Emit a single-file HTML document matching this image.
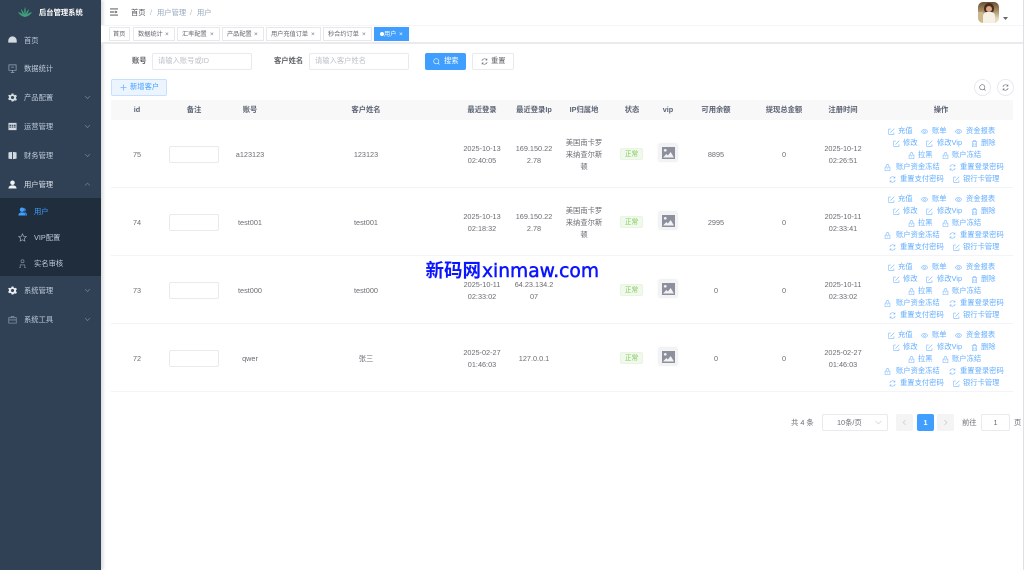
<!DOCTYPE html>
<html lang="zh">
<head>
<meta charset="utf-8">
<title>后台管理系统</title>
<style>
html,body{margin:0;padding:0;background:#fff}
#p{position:relative;width:1024px;height:570px;overflow:hidden;background:#fff;font-family:"Liberation Sans","Noto Sans CJK SC",sans-serif;font-size:7.3px;color:#696c72;filter:blur(.35px)}
#p div,#p span,#p b,#p svg{position:absolute;display:block}
#p b{font-weight:400;white-space:nowrap}
.sb{left:0;top:0;width:101px;height:570px;background:#304156;box-shadow:2px 0 3px rgba(0,21,41,.16)}
.m{left:24px;color:#bfcbd9;line-height:10px;white-space:nowrap;margin-top:.6px}
.mi{left:8px;width:9px;height:9px;fill:#d3dae2;stroke:none}
.ar{left:84px;width:7px;height:7px;fill:none;stroke:#7d8b9c;stroke-width:.8}
.tag{top:27px;height:14px;border:1px solid #e6e8ec;background:#fff;box-sizing:border-box}
.tt{top:1px;line-height:11px;white-space:nowrap;color:#62666f;font-size:6.2px}
.x{top:1px;line-height:11px;font-size:6.5px;color:#777}
.lb{top:56px;line-height:10px;color:#606266;font-weight:700;white-space:nowrap}
.in{border:1px solid #e8eaee;border-radius:2px;background:#fff;box-sizing:border-box}
.ph{color:#bcc0c8;line-height:10px;white-space:nowrap}
.th{top:100px;height:20px;line-height:19px;text-align:center;color:#5c6474;font-weight:700;white-space:nowrap}
.r{left:111px;width:902px;height:68px;border-bottom:1px solid #f3f4f7;box-sizing:border-box}
.c{text-align:center;line-height:12px;color:#696c72;white-space:nowrap;margin-top:.6px}
.note{left:58px;top:26px;width:50px;height:17px;border:1px solid #e8eaee;border-radius:2px;box-sizing:border-box;background:#fff}
.st{left:509px;top:28px;width:23px;height:12px;line-height:11px;background:#f0f9eb;border:1px solid #e9f5e1;border-radius:2px;box-sizing:border-box;color:#7cc95a;text-align:center;font-size:6.6px}
.vp{left:548px;top:24px;width:18px;height:17px;background:#f2f3f5;box-shadow:0 0 2px rgba(0,0,0,.16);border-radius:1px}
.vp svg{left:2.5px;top:2.5px;width:13px;height:12px}
.o{color:#62aeff;line-height:10px;white-space:nowrap;margin-top:1px}
.i{width:7px;height:7px;fill:none;stroke:#72b5ff;stroke-width:.8}
.r .i{margin-top:1px}
</style>
</head>
<body>
<svg width="0" height="0" style="position:absolute;display:block">
<defs>
<symbol id="e" viewBox="0 0 10 10"><path d="M4 1.500H1v7.500h7.500V6M3.500 6.500 9 1"/></symbol>
<symbol id="y" viewBox="0 0 10 10"><path d="M.5 5C2 2.500 3.500 2 5 2s3 .5 4.500 3C8 7.500 6.500 8 5 8S2 7.500.5 5Z"/><circle cx="5" cy="5" r="1.400"/></symbol>
<symbol id="t" viewBox="0 0 10 10"><path d="M1 2.500h8M3.500 2.500V1h3v1.500M2 2.500V9.500h6V2.500M4 4.500V8M6 4.500V8"/></symbol>
<symbol id="l" viewBox="0 0 10 10"><path d="M1.500 4.500h7v5h-7zM3 4.500V2.800a2 2 0 0 1 4 0v1.700M5 6v1.500"/></symbol>
<symbol id="f" viewBox="0 0 10 10"><path d="M1.200 4.200A4 4 0 0 1 8.200 2.600M8.800 5.800A4 4 0 0 1 1.800 7.400M8.500 .8v2.200H6.300M1.500 9.200V7h2.200"/></symbol>
<symbol id="s" viewBox="0 0 10 10"><circle cx="4.700" cy="4.700" r="3.700"/><path d="M7.400 7.400 9.300 9.300"/></symbol>
</defs>
</svg>
<div id="p">

<div style="left:1023px;top:0;width:1px;height:570px;background:#dcdfe3"></div>

<div class="sb"></div>
<svg style="left:17px;top:6px;width:16px;height:12px" viewBox="0 0 16 12"><path d="M8 11C7 7 7 4 8 1c1 3 1 6 0 10ZM8 11C6 9 4.500 6.500 4 3c2 2 3.500 4.500 4 8ZM8 11c2-2 3.500-4.500 4-8-2 2-3.500 4.500-4 8ZM8 11C5.500 10.500 2.500 9 1 6c3 .8 5.500 2.500 7 5ZM8 11c2.500-.5 5.500-2 7-5-3 .8-5.500 2.500-7 5Z" fill="#3fa37a"/></svg>
<div style="left:39px;top:7px;line-height:10px;color:#fff;font-weight:700;white-space:nowrap;margin-top:.6px">后台管理系统</div>

<svg class="mi" style="top:35px" viewBox="0 0 10 10"><path d="M5 1.500A4.700 4.700 0 0 0 .3 6.200V8.500h9.400V6.200A4.700 4.700 0 0 0 5 1.500Z"/></svg>
<div class="m" style="top:35px">首页</div>
<svg class="mi" style="top:64px;fill:none;stroke:#9aa7b6;stroke-width:.8" viewBox="0 0 10 10"><path d="M1 1h8v6H1zM5 7v2M3 9.300h4M3.500 3.500h3"/></svg>
<div class="m" style="top:63px">数据统计</div>
<svg class="mi" style="top:93px" viewBox="0 0 10 10"><path fill-rule="evenodd" d="M4 .5h2l.3 1.300 1.300.6L8.900 2l1 1.700-1 .9v1.400l1 .9-1 1.700-1.300-.4-1.300.6L6 9.500H4l-.3-1.300-1.300-.6L1.100 8l-1-1.700 1-.9V4l-1-.9L1.100 2l1.300.4 1.300-.6ZM5 3.300a1.700 1.700 0 1 0 0 3.400 1.700 1.700 0 0 0 0-3.400Z"/></svg>
<div class="m" style="top:92px">产品配置</div>
<svg class="ar" style="top:94px" viewBox="0 0 10 10"><path d="M1.500 3 5 6.500 8.500 3"/></svg>
<svg class="mi" style="top:122px" viewBox="0 0 10 10"><path fill-rule="evenodd" d="M.5 1h9v8h-9ZM1.500 3v1.300h2V3Zm2.700 0v1.300h1.600V3Zm2.300 0v1.300h2V3ZM1.500 5v1.300h2V5Zm2.700 0v1.300h1.600V5Zm2.300 0v1.300h2V5Z"/></svg>
<div class="m" style="top:121px">运营管理</div>
<svg class="ar" style="top:123px" viewBox="0 0 10 10"><path d="M1.500 3 5 6.500 8.500 3"/></svg>
<svg class="mi" style="top:151px" viewBox="0 0 10 10"><path d="M.5 1.500 4.500 1v8l-4-.5ZM5.500 1l4 .5v7l-4 .5Z"/></svg>
<div class="m" style="top:150px">财务管理</div>
<svg class="ar" style="top:152px" viewBox="0 0 10 10"><path d="M1.500 3 5 6.500 8.500 3"/></svg>
<svg class="mi" style="top:180px;fill:#f0f3f6" viewBox="0 0 10 10"><circle cx="5" cy="3" r="2.500"/><path d="M.5 9.500C.5 7 2.500 6 5 6s4.500 1 4.500 3.500Z"/></svg>
<div class="m" style="top:179px;color:#dfe5ec">用户管理</div>
<svg class="ar" style="top:181px" viewBox="0 0 10 10"><path d="M1.500 6.500 5 3l3.500 3.500"/></svg>

<div style="left:0;top:198px;width:101px;height:78px;background:#1f2d3d"></div>
<svg class="mi" style="left:18px;top:207px;fill:#409eff" viewBox="0 0 10 10"><circle cx="4.500" cy="3" r="2.500"/><path d="M.5 9.500C.5 7 2 6 4.500 6S8.500 7 8.500 9.500ZM7 1c2 1 2 3 .5 4.500 1.500.5 2.500 2 2.500 4H9C9 8 8.500 7 7.500 6.500Z"/></svg>
<div class="m" style="left:34px;top:206px;color:#409eff">用户</div>
<svg class="mi" style="left:18px;top:233px;fill:none;stroke:#9aa7b6;stroke-width:.8" viewBox="0 0 10 10"><path d="M5 1 6.200 3.700 9.200 4 7 6 7.600 9 5 7.500 2.400 9 3 6 .8 4 3.800 3.700Z"/></svg>
<div class="m" style="left:34px;top:232px">VIP配置</div>
<svg class="mi" style="left:18px;top:259px;fill:none;stroke:#7f8c9c;stroke-width:.8" viewBox="0 0 10 10"><circle cx="5" cy="2.500" r="1.700"/><path d="M2.500 9.500V6.500h5v3M1 9.500h2M7 9.500h2"/></svg>
<div class="m" style="left:34px;top:258px">实名审核</div>

<svg class="mi" style="top:286px;fill:#e6ebf0" viewBox="0 0 10 10"><path fill-rule="evenodd" d="M4 .5h2l.3 1.300 1.300.6L8.900 2l1 1.700-1 .9v1.400l1 .9-1 1.700-1.300-.4-1.300.6L6 9.500H4l-.3-1.300-1.300-.6L1.100 8l-1-1.700 1-.9V4l-1-.9L1.100 2l1.300.4 1.300-.6ZM5 3.300a1.700 1.700 0 1 0 0 3.400 1.700 1.700 0 0 0 0-3.400Z"/></svg>
<div class="m" style="top:285px">系统管理</div>
<svg class="ar" style="top:287px" viewBox="0 0 10 10"><path d="M1.500 3 5 6.500 8.500 3"/></svg>
<svg class="mi" style="top:315px;fill:none;stroke:#7f8c9c;stroke-width:.9" viewBox="0 0 10 10"><path d="M.8 3h8.400v6H.8zM3.500 3V1.500h3V3M.8 5.500h8.400"/></svg>
<div class="m" style="top:314px">系统工具</div>
<svg class="ar" style="top:316px" viewBox="0 0 10 10"><path d="M1.500 3 5 6.500 8.500 3"/></svg>

<svg style="left:110px;top:8px;width:8px;height:8px" viewBox="0 0 9 8"><path d="M0 .5h9M0 4h5M0 7.500h9" stroke="#444" fill="none"/><path d="M6 2.500v3l2.500-1.500Z" fill="#444"/></svg>
<div style="left:131px;top:7px;line-height:10px;color:#4f5258;white-space:nowrap;margin-top:.6px">首页</div>
<div style="left:150px;top:7px;line-height:10px;color:#b4b8be;margin-top:.6px">/</div>
<div style="left:157px;top:7px;line-height:10px;color:#97a8be;white-space:nowrap;margin-top:.6px">用户管理</div>
<div style="left:190px;top:7px;line-height:10px;color:#b4b8be;margin-top:.6px">/</div>
<div style="left:197px;top:7px;line-height:10px;color:#97a8be;white-space:nowrap;margin-top:.6px">用户</div>

<div style="left:978px;top:2px;width:21px;height:21px;border-radius:5px;overflow:hidden;background:linear-gradient(180deg,#6b5136 0%,#a48a62 40%,#e6dcc2 80%,#e9ddb9 100%)">
<div style="left:6px;top:1px;width:10px;height:11px;border-radius:5px;background:#4b2d1f"></div>
<div style="left:8px;top:4px;width:6px;height:6px;border-radius:3px;background:#d9a98c"></div>
<div style="left:5px;top:10px;width:12px;height:11px;border-radius:4px 4px 0 0;background:#f5f1e4"></div>
<div style="left:0;top:10px;width:5px;height:11px;background:#cdb88c"></div>
</div>
<svg style="left:1003px;top:17px;width:5px;height:3px" viewBox="0 0 5 3"><path d="M0 0h5L2.500 3Z" fill="#666"/></svg>

<div style="left:101px;top:25px;width:922px;height:19px;background:#fff;border-top:1px solid #f4f5f6;border-bottom:2px solid #e8eaec;box-sizing:border-box"></div>

<div class="tag" style="left:109px;width:21px"><span class="tt" style="left:3px">首页</span></div>
<div class="tag" style="left:133px;width:42px"><span class="tt" style="left:4px">数据统计</span><span class="x" style="left:31px">×</span></div>
<div class="tag" style="left:177px;width:43px"><span class="tt" style="left:4px">汇率配置</span><span class="x" style="left:32px">×</span></div>
<div class="tag" style="left:222px;width:42px"><span class="tt" style="left:4px">产品配置</span><span class="x" style="left:31px">×</span></div>
<div class="tag" style="left:266px;width:55px"><span class="tt" style="left:4px">用户充值订单</span><span class="x" style="left:44px">×</span></div>
<div class="tag" style="left:323px;width:49px"><span class="tt" style="left:4px">秒合约订单</span><span class="x" style="left:38px">×</span></div>
<div class="tag" style="left:374px;width:35px;background:#409eff;border-color:#409eff"><span style="left:5px;top:4px;width:4px;height:4px;border-radius:2px;background:#fff"></span><span class="tt" style="left:9px;color:#fff">用户</span><span class="x" style="left:24px;color:#fff">×</span></div>

<div class="lb" style="left:132px">账号</div>
<div class="in" style="left:152px;top:53px;width:100px;height:17px"></div>
<div class="ph" style="left:158px;top:56px">请输入账号或ID</div>
<div class="lb" style="left:274px">客户姓名</div>
<div class="in" style="left:309px;top:53px;width:100px;height:17px"></div>
<div class="ph" style="left:315px;top:56px">请输入客户姓名</div>
<div style="left:425px;top:53px;width:41px;height:17px;border-radius:2px;background:#409eff"></div>
<svg class="i" style="left:433px;top:58px;stroke:#fff"><use href="#s"/></svg>
<div style="left:444px;top:56px;line-height:10px;color:#fff;white-space:nowrap">搜索</div>
<div class="in" style="left:472px;top:53px;width:42px;height:17px"></div>
<svg class="i" style="left:481px;top:58px;stroke:#606266"><use href="#f"/></svg>
<div style="left:491px;top:56px;line-height:10px;color:#606266;white-space:nowrap">重置</div>

<div style="left:111px;top:79px;width:56px;height:17px;border:1px solid #c6e1ff;border-radius:2px;background:#ecf5ff;box-sizing:border-box"></div>
<svg class="i" style="left:120px;top:84px"><path d="M3.500 .5v6M.5 3.500h6"/></svg>
<div style="left:130px;top:82px;line-height:10px;color:#409eff;white-space:nowrap">新增客户</div>
<div style="left:974px;top:79px;width:17px;height:17px;border:1px solid #e8eaee;border-radius:50%;box-sizing:border-box"></div>
<svg class="i" style="left:979px;top:84px;stroke:#606266"><use href="#s"/></svg>
<div style="left:997px;top:79px;width:17px;height:17px;border:1px solid #e8eaee;border-radius:50%;box-sizing:border-box"></div>
<svg class="i" style="left:1002px;top:84px;stroke:#606266"><use href="#f"/></svg>

<div style="left:111px;top:100px;width:902px;height:20px;background:#f8f8f9"></div>
<div class="th" style="left:117px;width:40px">id</div>
<div class="th" style="left:174px;width:40px">备注</div>
<div class="th" style="left:230px;width:40px">账号</div>
<div class="th" style="left:336px;width:60px">客户姓名</div>
<div class="th" style="left:452px;width:60px">最近登录</div>
<div class="th" style="left:504px;width:60px">最近登录Ip</div>
<div class="th" style="left:554px;width:60px">IP归属地</div>
<div class="th" style="left:612px;width:40px">状态</div>
<div class="th" style="left:648px;width:40px">vip</div>
<div class="th" style="left:686px;width:60px">可用余额</div>
<div class="th" style="left:754px;width:60px">提现总金额</div>
<div class="th" style="left:813px;width:60px">注册时间</div>
<div class="th" style="left:911px;width:60px">操作</div>

<!-- row 75 -->
<div class="r" style="top:120px">
<div class="c" style="left:6px;width:40px;top:28px">75</div>
<div class="note"></div>
<div class="c" style="left:109px;width:60px;top:28px">a123123</div>
<div class="c" style="left:225px;width:60px;top:28px">123123</div>
<div class="c" style="left:341px;width:60px;top:22px">2025-10-13<br>02:40:05</div>
<div class="c" style="left:393px;width:60px;top:22px">169.150.22<br>2.78</div>
<div class="c" style="left:443px;width:60px;top:16px">美国南卡罗<br>来纳查尔斯<br>顿</div>
<div class="st">正常</div>
<div class="vp"><svg viewBox="0 0 12 12" preserveAspectRatio="none"><path fill-rule="evenodd" d="M0 0h12v12H0ZM3 2a1.300 1.300 0 1 0 0 2.600A1.300 1.300 0 0 0 3 2ZM1 10.500h10L8 5 5.500 8.500 4 7Z" fill="#8d909c"/></svg></div>
<div class="c" style="left:575px;width:60px;top:28px">8895</div>
<div class="c" style="left:643px;width:60px;top:28px">0</div>
<div class="c" style="left:702px;width:60px;top:22px">2025-10-12<br>02:26:51</div>
<svg class="i" style="left:777px;top:7px"><use href="#e"/></svg><b class="o" style="left:787px;top:5px">充值</b><svg class="i" style="left:810px;top:7px"><use href="#y"/></svg><b class="o" style="left:821px;top:5px">账单</b><svg class="i" style="left:844px;top:7px"><use href="#y"/></svg><b class="o" style="left:855px;top:5px">资金报表</b>
<svg class="i" style="left:782px;top:19px"><use href="#e"/></svg><b class="o" style="left:792px;top:17px">修改</b><svg class="i" style="left:815px;top:19px"><use href="#e"/></svg><b class="o" style="left:826px;top:17px">修改Vip</b><svg class="i" style="left:860px;top:19px"><use href="#t"/></svg><b class="o" style="left:870px;top:17px">删除</b>
<svg class="i" style="left:797px;top:31px"><use href="#l"/></svg><b class="o" style="left:807px;top:29px">拉黑</b><svg class="i" style="left:831px;top:31px"><use href="#l"/></svg><b class="o" style="left:841px;top:29px">账户冻结</b>
<svg class="i" style="left:773px;top:43px"><use href="#l"/></svg><b class="o" style="left:785px;top:41px">账户资金冻结</b><svg class="i" style="left:838px;top:43px"><use href="#f"/></svg><b class="o" style="left:849px;top:41px">重置登录密码</b>
<svg class="i" style="left:778px;top:55px"><use href="#f"/></svg><b class="o" style="left:789px;top:53px">重置支付密码</b><svg class="i" style="left:842px;top:55px"><use href="#e"/></svg><b class="o" style="left:852px;top:53px">银行卡管理</b>
</div>

<!-- row 74 -->
<div class="r" style="top:188px">
<div class="c" style="left:6px;width:40px;top:28px">74</div>
<div class="note"></div>
<div class="c" style="left:109px;width:60px;top:28px">test001</div>
<div class="c" style="left:225px;width:60px;top:28px">test001</div>
<div class="c" style="left:341px;width:60px;top:22px">2025-10-13<br>02:18:32</div>
<div class="c" style="left:393px;width:60px;top:22px">169.150.22<br>2.78</div>
<div class="c" style="left:443px;width:60px;top:16px">美国南卡罗<br>来纳查尔斯<br>顿</div>
<div class="st">正常</div>
<div class="vp"><svg viewBox="0 0 12 12" preserveAspectRatio="none"><path fill-rule="evenodd" d="M0 0h12v12H0ZM3 2a1.300 1.300 0 1 0 0 2.600A1.300 1.300 0 0 0 3 2ZM1 10.500h10L8 5 5.500 8.500 4 7Z" fill="#8d909c"/></svg></div>
<div class="c" style="left:575px;width:60px;top:28px">2995</div>
<div class="c" style="left:643px;width:60px;top:28px">0</div>
<div class="c" style="left:702px;width:60px;top:22px">2025-10-11<br>02:33:41</div>
<svg class="i" style="left:777px;top:7px"><use href="#e"/></svg><b class="o" style="left:787px;top:5px">充值</b><svg class="i" style="left:810px;top:7px"><use href="#y"/></svg><b class="o" style="left:821px;top:5px">账单</b><svg class="i" style="left:844px;top:7px"><use href="#y"/></svg><b class="o" style="left:855px;top:5px">资金报表</b>
<svg class="i" style="left:782px;top:19px"><use href="#e"/></svg><b class="o" style="left:792px;top:17px">修改</b><svg class="i" style="left:815px;top:19px"><use href="#e"/></svg><b class="o" style="left:826px;top:17px">修改Vip</b><svg class="i" style="left:860px;top:19px"><use href="#t"/></svg><b class="o" style="left:870px;top:17px">删除</b>
<svg class="i" style="left:797px;top:31px"><use href="#l"/></svg><b class="o" style="left:807px;top:29px">拉黑</b><svg class="i" style="left:831px;top:31px"><use href="#l"/></svg><b class="o" style="left:841px;top:29px">账户冻结</b>
<svg class="i" style="left:773px;top:43px"><use href="#l"/></svg><b class="o" style="left:785px;top:41px">账户资金冻结</b><svg class="i" style="left:838px;top:43px"><use href="#f"/></svg><b class="o" style="left:849px;top:41px">重置登录密码</b>
<svg class="i" style="left:778px;top:55px"><use href="#f"/></svg><b class="o" style="left:789px;top:53px">重置支付密码</b><svg class="i" style="left:842px;top:55px"><use href="#e"/></svg><b class="o" style="left:852px;top:53px">银行卡管理</b>
</div>

<!-- row 73 -->
<div class="r" style="top:256px">
<div class="c" style="left:6px;width:40px;top:28px">73</div>
<div class="note"></div>
<div class="c" style="left:109px;width:60px;top:28px">test000</div>
<div class="c" style="left:225px;width:60px;top:28px">test000</div>
<div class="c" style="left:341px;width:60px;top:22px">2025-10-11<br>02:33:02</div>
<div class="c" style="left:393px;width:60px;top:22px">64.23.134.2<br>07</div>
<div class="st">正常</div>
<div class="vp"><svg viewBox="0 0 12 12" preserveAspectRatio="none"><path fill-rule="evenodd" d="M0 0h12v12H0ZM3 2a1.300 1.300 0 1 0 0 2.600A1.300 1.300 0 0 0 3 2ZM1 10.500h10L8 5 5.500 8.500 4 7Z" fill="#8d909c"/></svg></div>
<div class="c" style="left:575px;width:60px;top:28px">0</div>
<div class="c" style="left:643px;width:60px;top:28px">0</div>
<div class="c" style="left:702px;width:60px;top:22px">2025-10-11<br>02:33:02</div>
<svg class="i" style="left:777px;top:7px"><use href="#e"/></svg><b class="o" style="left:787px;top:5px">充值</b><svg class="i" style="left:810px;top:7px"><use href="#y"/></svg><b class="o" style="left:821px;top:5px">账单</b><svg class="i" style="left:844px;top:7px"><use href="#y"/></svg><b class="o" style="left:855px;top:5px">资金报表</b>
<svg class="i" style="left:782px;top:19px"><use href="#e"/></svg><b class="o" style="left:792px;top:17px">修改</b><svg class="i" style="left:815px;top:19px"><use href="#e"/></svg><b class="o" style="left:826px;top:17px">修改Vip</b><svg class="i" style="left:860px;top:19px"><use href="#t"/></svg><b class="o" style="left:870px;top:17px">删除</b>
<svg class="i" style="left:797px;top:31px"><use href="#l"/></svg><b class="o" style="left:807px;top:29px">拉黑</b><svg class="i" style="left:831px;top:31px"><use href="#l"/></svg><b class="o" style="left:841px;top:29px">账户冻结</b>
<svg class="i" style="left:773px;top:43px"><use href="#l"/></svg><b class="o" style="left:785px;top:41px">账户资金冻结</b><svg class="i" style="left:838px;top:43px"><use href="#f"/></svg><b class="o" style="left:849px;top:41px">重置登录密码</b>
<svg class="i" style="left:778px;top:55px"><use href="#f"/></svg><b class="o" style="left:789px;top:53px">重置支付密码</b><svg class="i" style="left:842px;top:55px"><use href="#e"/></svg><b class="o" style="left:852px;top:53px">银行卡管理</b>
</div>

<!-- row 72 -->
<div class="r" style="top:324px">
<div class="c" style="left:6px;width:40px;top:28px">72</div>
<div class="note"></div>
<div class="c" style="left:109px;width:60px;top:28px">qwer</div>
<div class="c" style="left:225px;width:60px;top:28px">张三</div>
<div class="c" style="left:341px;width:60px;top:22px">2025-02-27<br>01:46:03</div>
<div class="c" style="left:393px;width:60px;top:28px">127.0.0.1</div>
<div class="st">正常</div>
<div class="vp"><svg viewBox="0 0 12 12" preserveAspectRatio="none"><path fill-rule="evenodd" d="M0 0h12v12H0ZM3 2a1.300 1.300 0 1 0 0 2.600A1.300 1.300 0 0 0 3 2ZM1 10.500h10L8 5 5.500 8.500 4 7Z" fill="#8d909c"/></svg></div>
<div class="c" style="left:575px;width:60px;top:28px">0</div>
<div class="c" style="left:643px;width:60px;top:28px">0</div>
<div class="c" style="left:702px;width:60px;top:22px">2025-02-27<br>01:46:03</div>
<svg class="i" style="left:777px;top:7px"><use href="#e"/></svg><b class="o" style="left:787px;top:5px">充值</b><svg class="i" style="left:810px;top:7px"><use href="#y"/></svg><b class="o" style="left:821px;top:5px">账单</b><svg class="i" style="left:844px;top:7px"><use href="#y"/></svg><b class="o" style="left:855px;top:5px">资金报表</b>
<svg class="i" style="left:782px;top:19px"><use href="#e"/></svg><b class="o" style="left:792px;top:17px">修改</b><svg class="i" style="left:815px;top:19px"><use href="#e"/></svg><b class="o" style="left:826px;top:17px">修改Vip</b><svg class="i" style="left:860px;top:19px"><use href="#t"/></svg><b class="o" style="left:870px;top:17px">删除</b>
<svg class="i" style="left:797px;top:31px"><use href="#l"/></svg><b class="o" style="left:807px;top:29px">拉黑</b><svg class="i" style="left:831px;top:31px"><use href="#l"/></svg><b class="o" style="left:841px;top:29px">账户冻结</b>
<svg class="i" style="left:773px;top:43px"><use href="#l"/></svg><b class="o" style="left:785px;top:41px">账户资金冻结</b><svg class="i" style="left:838px;top:43px"><use href="#f"/></svg><b class="o" style="left:849px;top:41px">重置登录密码</b>
<svg class="i" style="left:778px;top:55px"><use href="#f"/></svg><b class="o" style="left:789px;top:53px">重置支付密码</b><svg class="i" style="left:842px;top:55px"><use href="#e"/></svg><b class="o" style="left:852px;top:53px">银行卡管理</b>
</div>

<svg style="left:420px;top:254px;width:190px;height:34px" viewBox="0 0 190 34"><text x="5.500" y="23" font-family="'Noto Sans CJK SC',sans-serif" font-size="18.500" font-weight="700" fill="#0a14ff">新码网</text><text x="62" y="23" textLength="117" lengthAdjust="spacingAndGlyphs" font-family="'DejaVu Sans',sans-serif" font-size="19" stroke="#0a14ff" stroke-width=".5" fill="#0a14ff">xinmaw.com</text></svg>

<div style="left:791px;top:418px;line-height:10px;white-space:nowrap">共 4 条</div>
<div class="in" style="left:822px;top:414px;width:66px;height:17px"></div>
<div style="left:837px;top:418px;line-height:10px;white-space:nowrap">10条/页</div>
<svg class="ar" style="left:875px;top:419px;stroke:#c0c4cc" viewBox="0 0 10 10"><path d="M1 3 5 7 9 3"/></svg>
<div style="left:896px;top:414px;width:17px;height:17px;background:#f4f4f5;border-radius:2px"></div>
<svg class="ar" style="left:901px;top:419px;stroke:#c0c4cc" viewBox="0 0 10 10"><path d="M6.500 1.500 3 5l3.500 3.500"/></svg>
<div style="left:917px;top:414px;width:17px;height:17px;line-height:17px;background:#409eff;border-radius:2px;color:#fff;text-align:center;font-weight:700">1</div>
<div style="left:937px;top:414px;width:17px;height:17px;background:#f4f4f5;border-radius:2px"></div>
<svg class="ar" style="left:942px;top:419px;stroke:#c0c4cc" viewBox="0 0 10 10"><path d="M3.500 1.500 7 5 3.500 8.500"/></svg>
<div style="left:962px;top:418px;line-height:10px;white-space:nowrap">前往</div>
<div class="in" style="left:981px;top:414px;width:29px;height:17px;line-height:15px;text-align:center">1</div>
<div style="left:1014px;top:418px;line-height:10px;white-space:nowrap">页</div>

</div>
</body>
</html>
